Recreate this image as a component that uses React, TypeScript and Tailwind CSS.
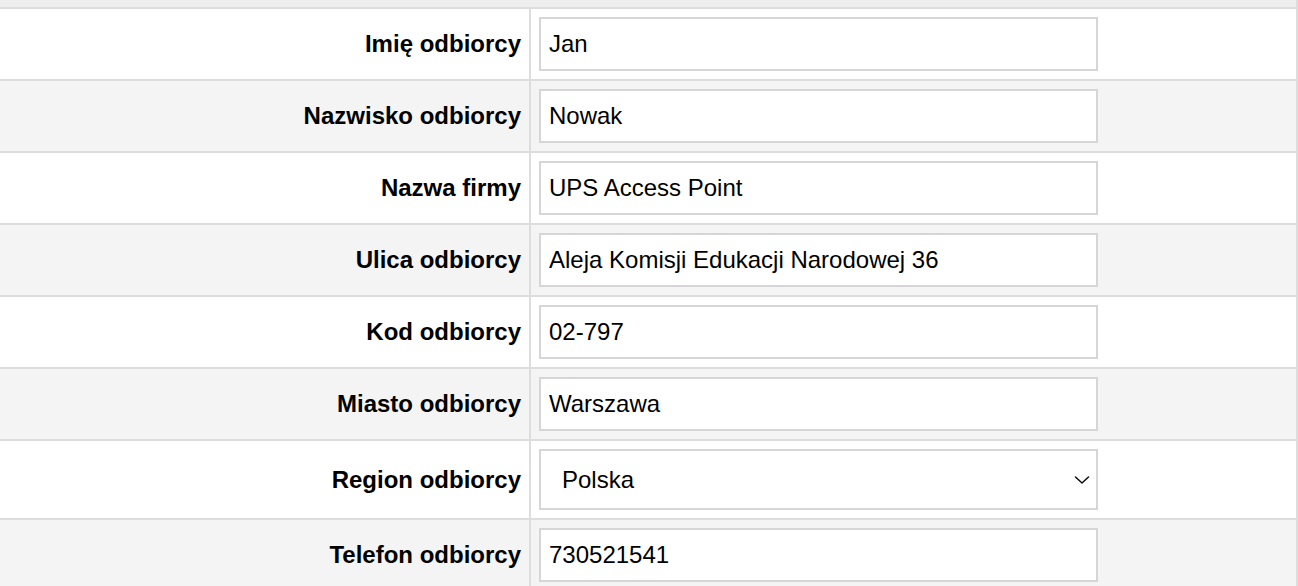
const rows: { label: string; value: string; select?: boolean }[] = [
  { label: 'Imię odbiorcy', value: 'Jan' },
  { label: 'Nazwisko odbiorcy', value: 'Nowak' },
  { label: 'Nazwa firmy', value: 'UPS Access Point' },
  { label: 'Ulica odbiorcy', value: 'Aleja Komisji Edukacji Narodowej 36' },
  { label: 'Kod odbiorcy', value: '02-797' },
  { label: 'Miasto odbiorcy', value: 'Warszawa' },
  { label: 'Region odbiorcy', value: 'Polska', select: true },
  { label: 'Telefon odbiorcy', value: '730521541' },
]

function Chevron() {
  return (
    <svg width="16" height="9" viewBox="0 0 16 9" fill="none" className="pointer-events-none absolute right-[8px] top-1/2 -translate-y-1/2">
      <polyline points="1.5,1.5 8,7.5 14.5,1.5" stroke="#111" strokeWidth="1.6" strokeLinecap="round" strokeLinejoin="round" />
    </svg>
  )
}

export default function App() {
  return (
    <div className="min-h-screen bg-white text-black" style={{ fontFamily: '"Liberation Sans", Arial, sans-serif' }}>
      <div className="h-[9px] bg-[#eeeeee] border-b-2 border-[#dddddd] border-r-2" />
      {rows.map((row, i) => (
        <div key={row.label} className={`flex border-b-2 border-[#dddddd] ${i % 2 === 1 ? 'bg-[#f4f4f4]' : 'bg-white'}`}>
          <div className="w-[531px] shrink-0 border-r-2 border-[#dddddd] flex items-center justify-end pr-2 text-[24px] font-bold">
            {row.label}
          </div>
          <div className="flex-1 border-r-2 border-[#dddddd] p-2">
            {row.select ? (
              <div className="relative w-[559px]">
                <select
                  defaultValue={row.value}
                  className="block w-full h-[61px] appearance-none border-2 border-[#d6d6d6] bg-white pl-[21px] text-[24px] outline-none"
                >
                  <option>Polska</option>
                </select>
                <Chevron />
              </div>
            ) : (
              <input
                readOnly
                value={row.value}
                className="block w-[559px] h-[54px] border-2 border-[#d6d6d6] bg-white px-2 text-[24px] outline-none"
              />
            )}
          </div>
        </div>
      ))}
    </div>
  )
}
